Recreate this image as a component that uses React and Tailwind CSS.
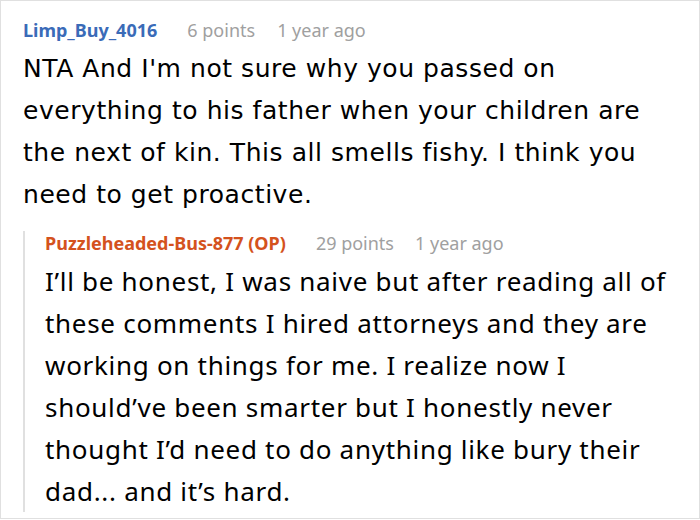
import React from 'react';

const Header = ({ name, color, points, gap }) => (
  <div className="text-[18px] leading-6 flex items-baseline font-['Noto_Sans',sans-serif]">
    <span className={`font-bold ${color}`}>{name}</span>
    <span className="ml-[30px] text-[#a0a0a0]">{points}</span>
    <span className={`${gap} text-[#a0a0a0]`}>1 year ago</span>
  </div>
);

export default function App() {
  return (
    <div className="w-[700px] h-[519px] bg-white border border-[#e0e0e0] text-black overflow-hidden">
      <div className="pl-[22px] pt-[17px]">
        <Header name="Limp_Buy_4016" color="text-[#3a6bb8]" points="6 points" gap="ml-[22px]" />
        <p className="mt-[6px] text-[25px] leading-[42px] tracking-[0.55px] font-['DejaVu_Sans',sans-serif]">
          NTA And I'm not sure why you passed on<br />
          everything to his father when your children are<br />
          the next of kin. This all smells fishy. I think you<br />
          need to get proactive.
        </p>

        <div className="mt-[26px] border-l-2 border-[#e0e0e0] pl-[20px]">
          <div className="-mt-[11px]">
            <Header name="Puzzleheaded-Bus-877 (OP)" color="text-[#d4521d]" points="29 points" gap="ml-[21px]" />
          </div>
          <p className="mt-[5px] -mb-[10px] text-[26px] leading-[42px] tracking-[0.7px] font-['Noto_Sans',sans-serif]">
            I’ll be honest, I was naive but after reading all of<br />
            these comments I hired attorneys and they are<br />
            working on things for me. I realize now I<br />
            should’ve been smarter but I honestly never<br />
            thought I’d need to do anything like bury their<br />
            dad... and it’s hard.
          </p>
        </div>
      </div>
    </div>
  );
}
